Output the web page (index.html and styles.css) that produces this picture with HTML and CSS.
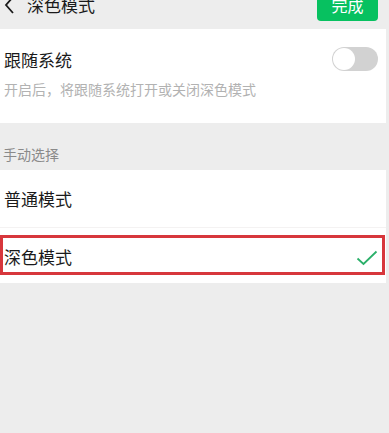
FILE: index.html
```html
<!DOCTYPE html>
<html lang="zh-CN">
<head>
<meta charset="utf-8">
<title>深色模式</title>
<link rel="stylesheet" href="styles.css">
</head>
<body>
<div class="page">
  <header class="topbar">
    <div class="topbar-left">
      <svg class="back" width="12" height="20" viewBox="0 0 12 20"><path d="M10 2 L3 10 L10 18" fill="none" stroke="#1a1a1a" stroke-width="1.8"/></svg>
      <span class="title">深色模式</span>
    </div>
    <button class="done">完成</button>
  </header>

  <section class="card follow">
    <div class="follow-text">
      <div class="item-title">跟随系统</div>
      <div class="item-desc">开启后，将跟随系统打开或关闭深色模式</div>
    </div>
    <div class="switch"><span class="knob"></span></div>
  </section>

  <div class="group-label">手动选择</div>

  <section class="card options">
    <div class="option">
      <span class="item-title">普通模式</span>
    </div>
    <div class="option selected">
      <span class="item-title">深色模式</span>
      <svg class="check" width="22" height="16" viewBox="0 0 22 16"><path d="M1.5 8.5 L7.5 14 L20.5 1.5" fill="none" stroke="#2bb06a" stroke-width="1.8"/></svg>
      <span class="highlight"></span>
    </div>
  </section>
</div>
</body>
</html>
```
FILE: styles.css
```css
* { box-sizing: border-box; }
html, body {
  margin: 0;
  padding: 0;
  background: #ededed;
  font-family: "Noto Sans CJK SC", "Noto Sans", sans-serif;
  overflow: hidden;
}
.page {
  width: 389px;
  height: 433px;
}
.topbar {
  height: 48px;
  margin-top: -19px;
  display: flex;
  align-items: center;
  justify-content: space-between;
  padding: 0 11px 0 3px;
}
.topbar-left {
  display: flex;
  align-items: center;
  gap: 12px;
}
.back { display: block; }
.title {
  font-size: 17px;
  color: #1a1a1a;
  line-height: 24px;
}
.done {
  border: none;
  background: #07c160;
  color: #fff;
  font-family: inherit;
  font-size: 16px;
  width: 61px;
  height: 32px;
  border-radius: 4px;
  padding: 0;
  line-height: 32px;
}
.card {
  background: #fff;
  margin-right: 3px;
}
.follow {
  height: 94px;
  display: flex;
  justify-content: space-between;
  align-items: flex-start;
  padding: 19px 8px 0 4px;
}
.item-title {
  font-size: 17px;
  line-height: 24px;
  color: #1a1a1a;
}
.item-desc {
  margin-top: 7px;
  font-size: 14px;
  line-height: 20px;
  color: #b2b2b2;
}
.switch {
  margin-top: -1px;
  width: 46px;
  height: 24px;
  border-radius: 12px;
  background: #d2d2d2;
  padding: 1px;
}
.knob {
  display: block;
  width: 22px;
  height: 22px;
  border-radius: 50%;
  background: #fff;
}
.group-label {
  height: 47px;
  padding: 21px 0 0 3px;
  font-size: 14px;
  line-height: 20px;
  color: #8a8a8a;
}
.options {
  height: 113px;
}
.option {
  position: relative;
  height: 57px;
  display: flex;
  align-items: center;
  justify-content: space-between;
  padding: 0 8px 0 4px;
}
.option + .option {
  height: 56px;
  padding-top: 3px;
  border-top: 1px solid #f4f2f2;
}
.check { display: block; margin-top: 1px; }
.highlight {
  position: absolute;
  left: 0;
  right: 1px;
  top: 7px;
  height: 40px;
  border: 3px solid #d7373c;
  pointer-events: none;
}
```
